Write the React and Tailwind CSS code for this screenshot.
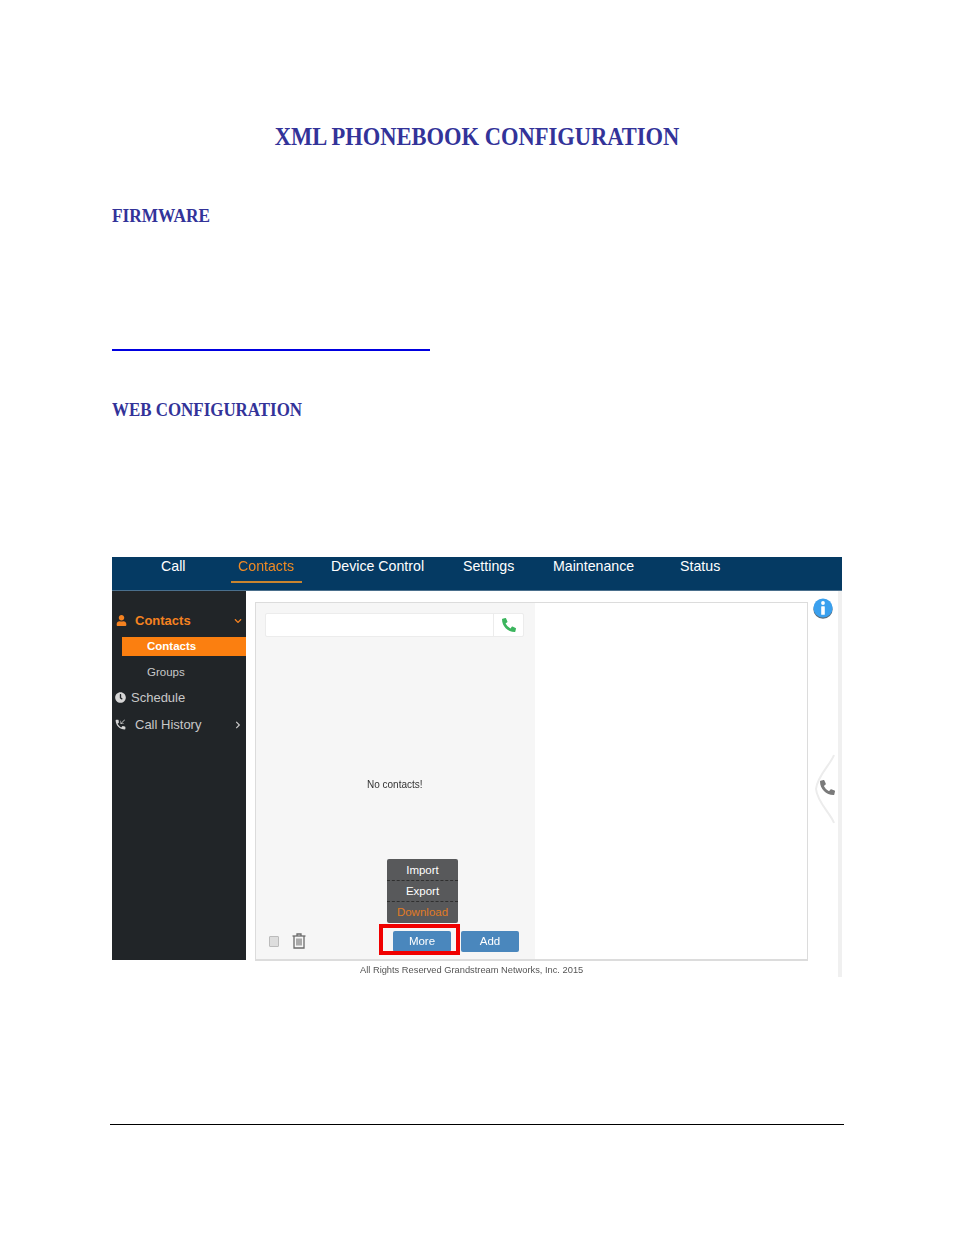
import React from "react";
import { FaUser, FaClock, FaPhoneAlt, FaChevronDown, FaChevronRight } from "react-icons/fa";
import { MdPhoneCallback } from "react-icons/md";

function Trash() {
  return (
    <svg width="14" height="16" viewBox="0 0 14 16" fill="none" stroke="#6b6b6b" strokeWidth="1.3">
      <path d="M0.5 3h13" />
      <path d="M5 3V1h4v2" />
      <path d="M2 3v12h10V3" />
      <path d="M5 5.5v7M7 5.5v7M9 5.5v7" strokeWidth="1.1" />
    </svg>
  );
}

function InfoBadge() {
  return (
    <svg width="20" height="21" viewBox="0 0 20 21">
      <ellipse cx="10" cy="11.4" rx="9.6" ry="9.4" fill="#5b6b78" />
      <circle cx="10" cy="10" r="9.6" fill="#3aa0ee" />
      <circle cx="10" cy="5" r="1.9" fill="#fff" />
      <rect x="8.2" y="8.2" width="3.6" height="8.6" rx="0.6" fill="#fff" />
    </svg>
  );
}

function SideHandle() {
  return (
    <svg width="24" height="70" viewBox="0 0 24 70" fill="none">
      <path d="M20 1 C17 10 3 22 2 35 C3 48 17 60 20 69" stroke="#ececec" strokeWidth="2" />
    </svg>
  );
}

const headingFont = "font-['Liberation_Serif',serif] font-bold text-[#333399]";

export default function App() {
  return (
    <div className="flex h-[1235px] w-[954px] flex-col overflow-hidden bg-white font-['Liberation_Sans',Arial,sans-serif]">
      <h1 className={`mt-[121px] origin-center scale-x-[0.9] text-center text-[25px] leading-[32px] ${headingFont}`}>
        XML PHONEBOOK CONFIGURATION
      </h1>

      <div className="flex flex-col pl-[112px]">
        <h2 className={`mt-[51px] origin-left scale-x-[0.96] text-[18px] leading-[24px] ${headingFont}`}>
          FIRMWARE
        </h2>
        <div className="mt-[121px] h-[2px] w-[318px] bg-[#0000e0]" />
        <h2 className={`mt-[47px] origin-left scale-x-[0.94] text-[18px] leading-[24px] ${headingFont}`}>
          WEB CONFIGURATION
        </h2>

        <section className="mt-[135px] flex h-[420px] w-[730px] flex-col blur-[0.45px]">
          <nav className="flex h-[34px] shrink-0 items-start border-b border-[#4a6f8c] bg-[#053a63] pt-[1px] text-[14.2px] leading-[17px] text-white">
            <span className="ml-[49px] w-[77px]">Call</span>
            <span className="relative w-[64px] text-[#f08a24]">
              Contacts
              <span className="absolute top-[23px] -left-[7px] h-[2px] w-[71px] bg-[#c8842f]" />
            </span>
            <span className="ml-[29px] w-[132px]">Device Control</span>
            <span className="w-[90px]">Settings</span>
            <span className="w-[127px]">Maintenance</span>
            <span>Status</span>
          </nav>

          <div className="flex min-h-0 flex-1">
            <aside className="h-[369px] w-[134px] shrink-0 bg-[#212528] pt-[21px] text-[13px] text-[#c8c8c8]">
              <div className="flex h-[17px] items-center font-bold text-[#f58220]">
                <FaUser className="ml-[4px] text-[11px]" />
                <span className="ml-[8px]">Contacts</span>
                <FaChevronDown className="mr-[4px] ml-auto text-[8px]" />
              </div>
              <div className="mt-[8px] ml-[10px] flex h-[19px] items-center bg-[#fb7f10] pt-[1px] pl-[25px] text-[11.5px] font-bold text-white">
                Contacts
              </div>
              <div className="mt-[7px] h-[19px] pl-[35px] text-[11.5px] leading-[19px]">Groups</div>
              <div className="mt-[6px] flex h-[19px] items-center">
                <FaClock className="ml-[3px] text-[11px] text-[#d6d6d6]" />
                <span className="ml-[5px]">Schedule</span>
              </div>
              <div className="mt-[8px] flex h-[19px] items-center">
                <MdPhoneCallback className="ml-[2px] text-[13px] text-[#d6d6d6]" />
                <span className="ml-[8px]">Call History</span>
                <FaChevronRight className="mr-[4px] ml-auto text-[8px]" />
              </div>
            </aside>

            <div className="flex min-w-0 flex-1 flex-col">
              <div className="flex h-[369px]">
                <div className="mt-[11px] ml-[9px] flex h-[359px] w-[553px] border border-b-2 border-[#dcdcdc]">
                  <div className="flex w-[279px] flex-col bg-[#f6f6f6] pt-[10px]">
                    <div className="ml-[9px] flex h-[24px] w-[259px] rounded-[2px] border border-[#ececec] bg-white">
                      <div className="flex-1" />
                      <div className="flex w-[30px] items-center justify-center border-l border-[#ececec]">
                        <FaPhoneAlt className="-scale-x-100 rotate-90 text-[14px] text-[#3cb55e]" />
                      </div>
                    </div>
                    <p className="mt-[141px] pl-[111px] text-[10px] leading-[14px] text-[#333]">No contacts!</p>
                    <div className="relative mt-[139px] flex h-[21px] items-center">
                      <span className="ml-[13px] h-[11px] w-[10px] rounded-[1px] border border-[#bbb] bg-[#ddd]" />
                      <span className="ml-[13px] flex -translate-y-px">
                        <Trash />
                      </span>
                      <button className="ml-[87px] h-[21px] w-[58px] rounded-[2px] bg-[#4a87bd] text-[11.5px] text-white">More</button>
                      <button className="ml-[10px] h-[21px] w-[58px] rounded-[2px] bg-[#4a87bd] text-[11.5px] text-white">Add</button>

                      <div className="absolute -top-[72px] left-[131px] flex h-[64px] w-[71px] flex-col rounded-[2px] bg-[#58595b] pt-[1px] text-center text-[11.5px] leading-[20px] text-white">
                        <span className="h-[21px] border-b border-dashed border-[#2f2f2f]">Import</span>
                        <span className="h-[21px] border-b border-dashed border-[#2f2f2f]">Export</span>
                        <span className="h-[21px] text-[#e07b24]">Download</span>
                      </div>
                      <div className="absolute -top-[7px] left-[123px] h-[31px] w-[81px] border-[4px] border-[#f00000]" />
                    </div>
                  </div>
                  <div className="flex-1 bg-white" />
                </div>
                <div className="relative flex-1">
                  <div className="absolute top-[7px] left-[5px]">
                    <InfoBadge />
                  </div>
                  <div className="absolute top-[163px] left-[6px]">
                    <SideHandle />
                  </div>
                  <div className="absolute top-[189px] left-[12px]">
                    <FaPhoneAlt className="-scale-x-100 rotate-90 text-[15px] text-[#7a7a7a]" />
                  </div>
                  <div className="absolute top-0 right-0 h-[386px] w-[4px] bg-[#f0f0f0]" />
                </div>
              </div>
              <p className="mt-[3px] pl-[114px] text-[9.3px] leading-[14px] text-[#555]">
                All Rights Reserved Grandstream Networks, Inc. 2015
              </p>
            </div>
          </div>
        </section>
      </div>

      <div className="mt-[147px] ml-[110px] h-[1px] w-[734px] bg-black" />
    </div>
  );
}
